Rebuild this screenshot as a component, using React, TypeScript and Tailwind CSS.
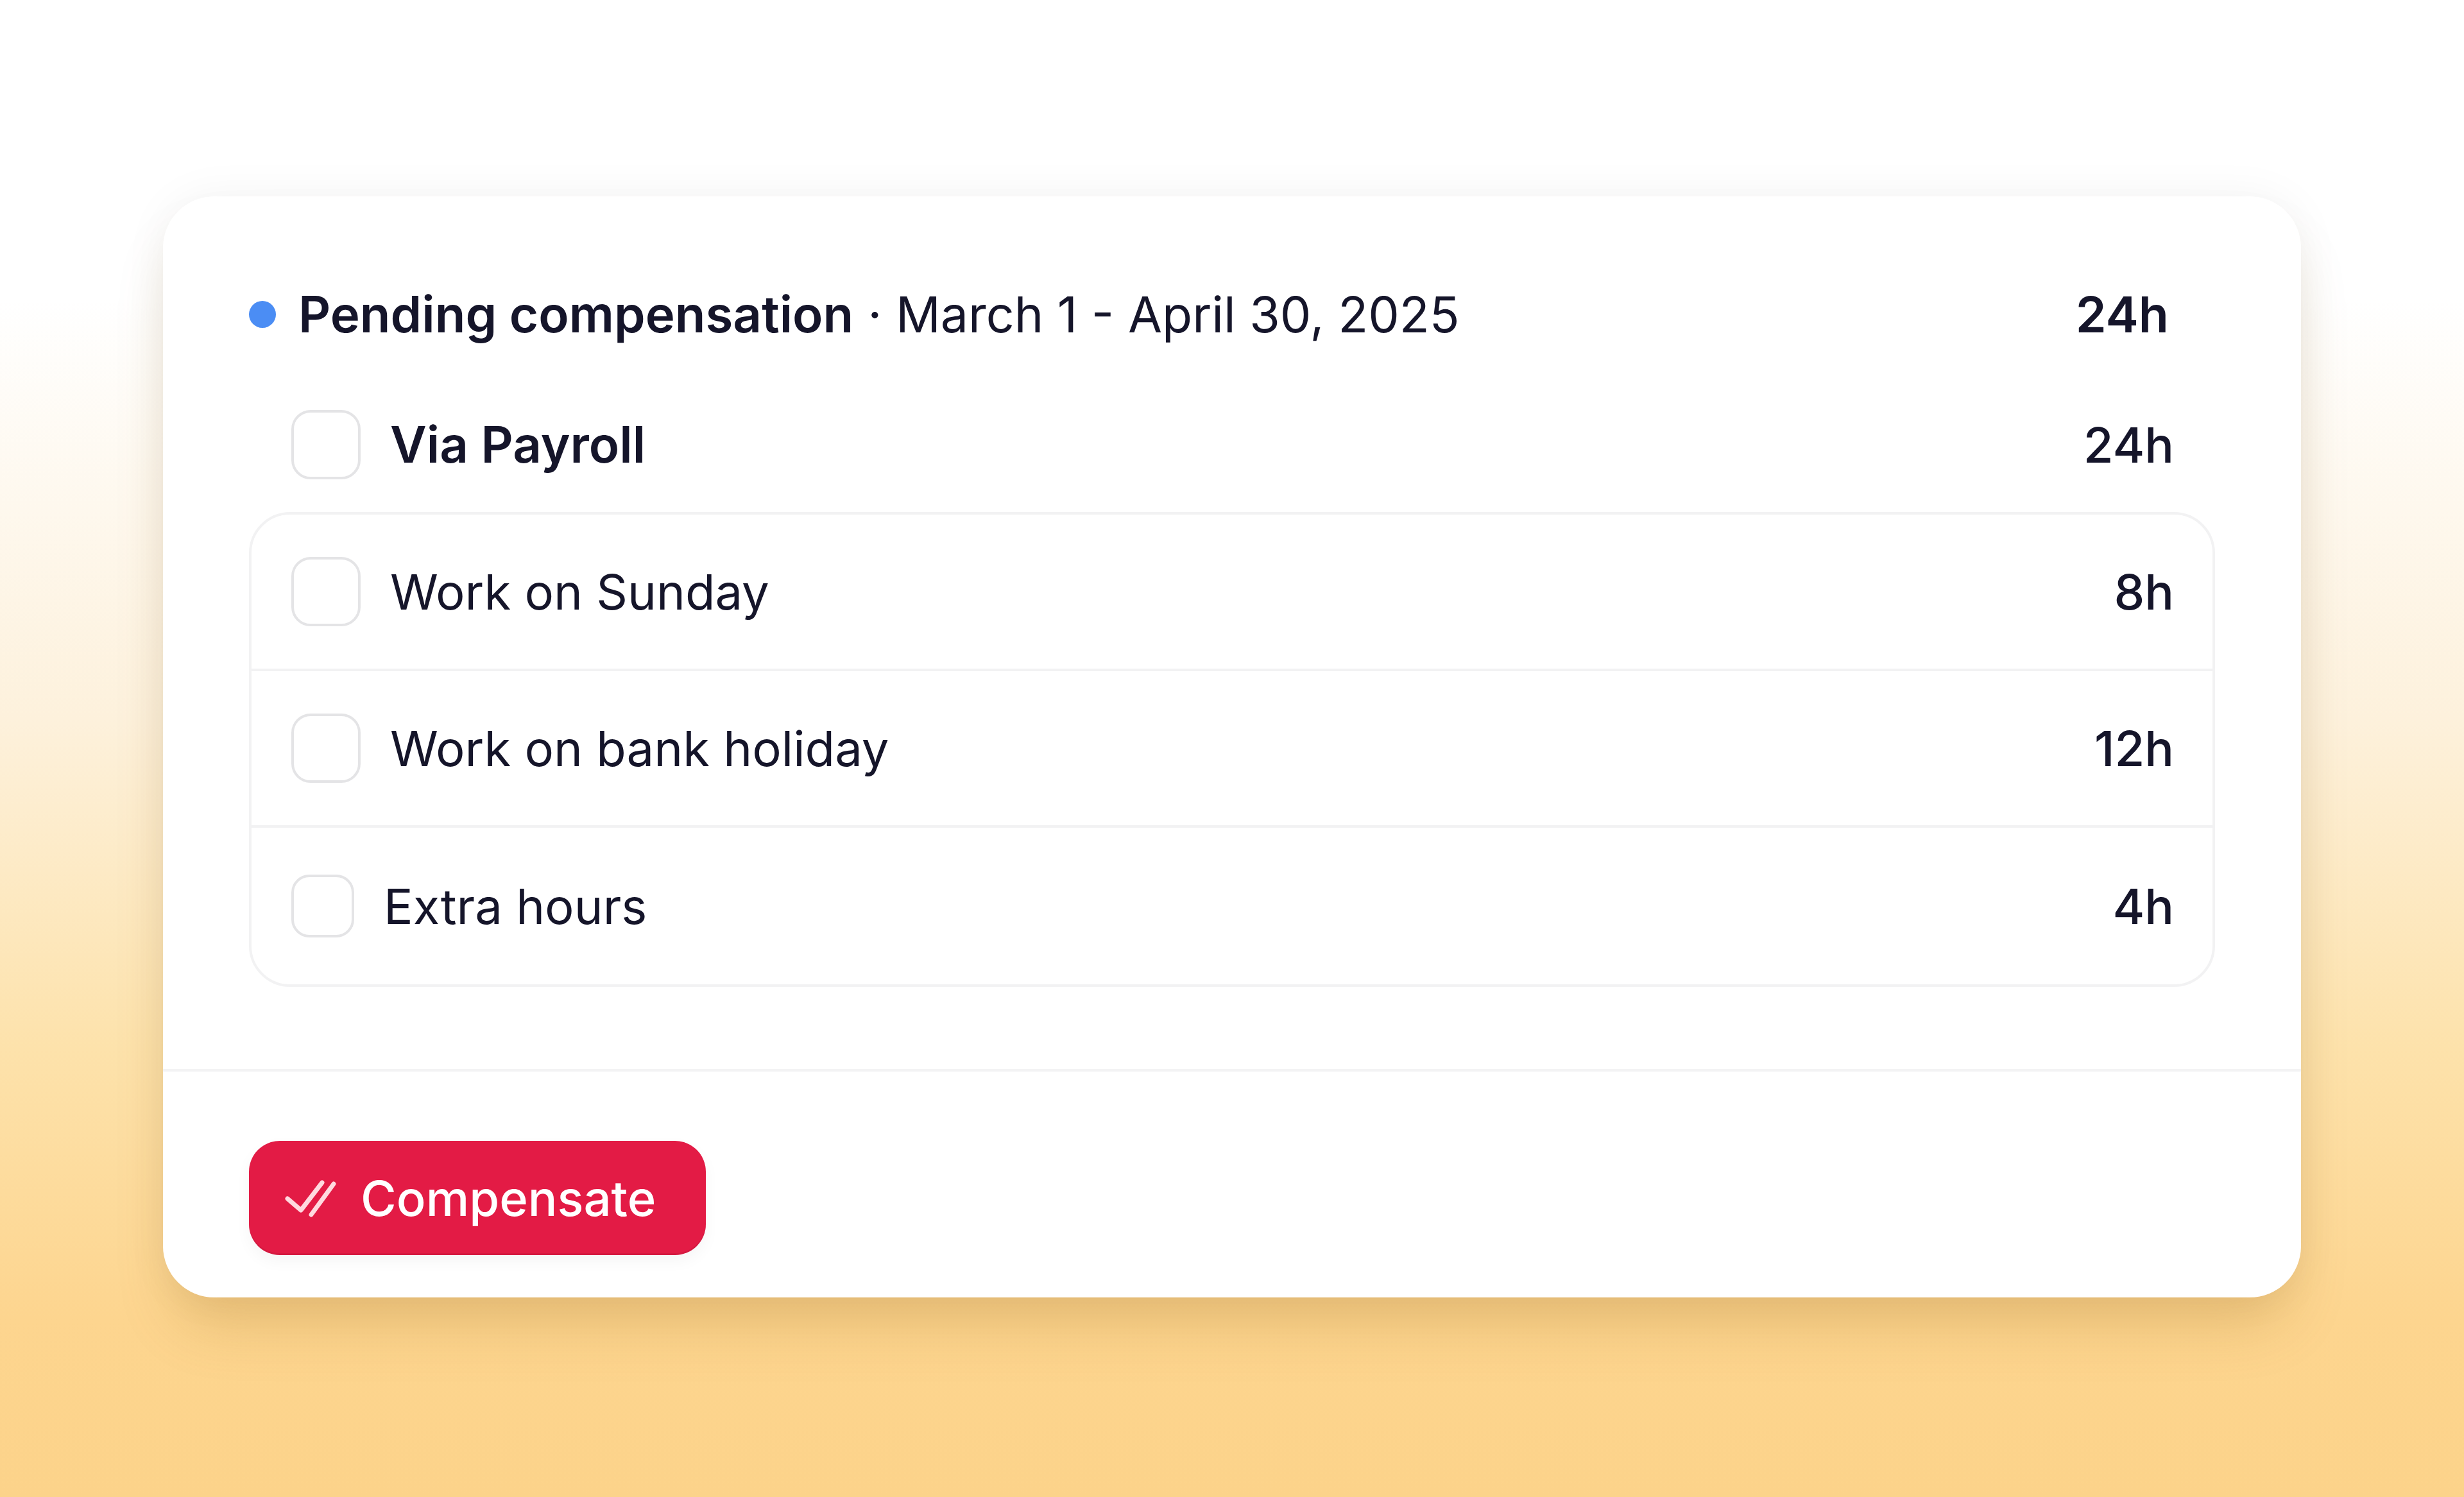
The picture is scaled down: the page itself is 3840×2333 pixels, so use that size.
const rows = [
  { label: "Work on Sunday", hours: "8h", small: false },
  { label: "Work on bank holiday", hours: "12h", small: false },
  { label: "Extra hours", hours: "4h", small: true },
];

function Checkbox({ small }: { small?: boolean }) {
  return (
    <span
      className={
        small
          ? "block h-[98px] w-[98px] shrink-0 rounded-[28px] border-4 border-[#e4e4e6] bg-white"
          : "block h-[108px] w-[108px] shrink-0 rounded-[30px] border-4 border-[#e4e4e6] bg-white"
      }
    />
  );
}

function DoubleCheck() {
  return (
    <svg width="80" height="64" viewBox="0 0 80 64" fill="none" className="shrink-0">
      <path d="M4 33 L25 51 L58 8" stroke="#ffd9df" strokeWidth="7" strokeLinecap="round" strokeLinejoin="round" />
      <path d="M41 58 L76 10" stroke="#ffd9df" strokeWidth="7" strokeLinecap="round" />
    </svg>
  );
}

export default function App() {
  return (
    <main
      className="flex h-[2333px] w-full flex-col items-center bg-[linear-gradient(to_bottom,#ffffff_0%,#ffffff_20%,#fdf1dc_48%,#fde2ab_70%,#fdd58f_88%,#fcd38a_100%)] pt-[306px]"
      style={{ fontFamily: "Inter, 'Noto Sans', sans-serif" }}
    >
      <div className="flex w-[3332px] flex-col rounded-[80px] bg-white text-[#15152a] shadow-[0_60px_90px_-20px_rgba(150,100,20,0.22),0_0_70px_rgba(0,0,0,0.05)]">
        <div className="flex flex-col px-[134px] pb-[128px] pt-[128px]">
          {/* header */}
          <div className="flex h-[112px] items-center pr-[72px] text-[77px] leading-none">
            <span className="mr-[35px] h-[42px] w-[42px] shrink-0 rounded-full bg-[#4b8df4]" />
            <span className="text-[78px] font-semibold">Pending compensation</span>
            <span className="ml-[22px] font-normal">· March 1 - April 30, 2025</span>
            <span className="ml-auto font-semibold">24h</span>
          </div>

          {/* group */}
          <div className="mt-[63px] flex h-[168px] items-center pl-[66px] pr-[64px] text-[76px] leading-none">
            <Checkbox />
            <span className="ml-[46px] text-[78px] font-semibold">Via Payroll</span>
            <span className="ml-auto font-medium">24h</span>
          </div>

          <div className="mt-[21px] flex flex-col divide-y-4 divide-[#f2f2f3] rounded-[64px] border-4 border-[#f2f2f3]">
            {rows.map((r) => (
              <div key={r.label} className="flex h-[244px] items-center pl-[62px] pr-[60px] text-[76px] leading-none">
                <Checkbox small={r.small} />
                <span className="ml-[46px] font-normal">{r.label}</span>
                <span className="ml-auto font-medium">{r.hours}</span>
              </div>
            ))}
          </div>
        </div>

        <div className="border-t-4 border-[#f3f3f4] px-[134px] pb-[66px] pt-[108px]">
          <button className="flex h-[178px] items-center gap-[38px] rounded-[48px] bg-[#e31b45] pl-[56px] pr-[78px] text-[76px] font-medium leading-none text-white shadow-[0_-3px_0_0_rgba(0,0,0,0.06)_inset,0_10px_24px_rgba(0,0,0,0.04)]">
            <DoubleCheck />
            <span>Compensate</span>
          </button>
        </div>
      </div>
    </main>
  );
}
